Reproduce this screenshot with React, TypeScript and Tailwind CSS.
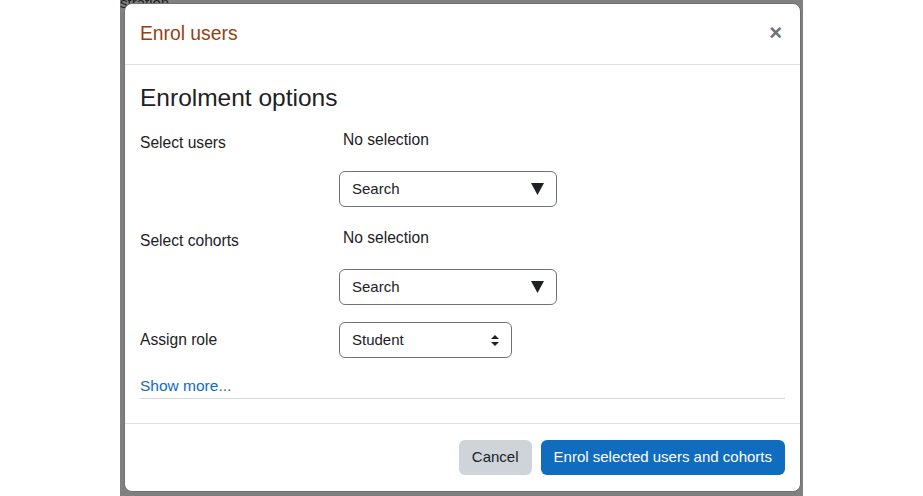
import React from "react";

const font = { fontFamily: '"Liberation Sans", Arial, sans-serif' };

function SearchBox() {
  return (
    <div className="flex h-[36px] w-[218px] items-center justify-between rounded-[6px] border border-[#6e737a] bg-white pl-[12px] pr-[12px]">
      <span className="text-[15px] text-[#1d2125]">Search</span>
      <svg width="13" height="12" viewBox="0 0 13 12">
        <polygon points="0,0 13,0 6.5,12" fill="#1d2125" />
      </svg>
    </div>
  );
}

export default function App() {
  return (
    <div className="flex h-[496px] w-[923px] bg-white" style={font}>
      <div className="w-[120px]" />
      <div className="relative h-[496px] w-[683px] overflow-hidden bg-[#808080]">
        <div className="absolute left-[0px] top-[-5px] text-[15px] leading-[15px] text-[#202020]">
          stration
        </div>
        <div className="relative ml-[4px] mt-[3px] flex h-[489px] w-[677px] flex-col rounded-[8px] border border-[#707070] bg-white">
          {/* header */}
          <div className="flex h-[61px] shrink-0 items-center justify-between border-b border-[#dee2e6] pl-[15px] pr-[18px]">
            <span className="text-[19.3px] text-[#973f11]">Enrol users</span>
            <span className="mt-[-2px] text-[22px] font-bold leading-none text-[#6a737b]">×</span>
          </div>
          {/* body */}
          <div className="flex flex-col px-[15px] pt-[18px]">
            <div className="text-[24.5px] leading-[29px] text-[#1d2125]">Enrolment options</div>
            <div className="mt-[16px] flex">
              <div className="w-[199px] pt-[4px] text-[15.6px] leading-[22px] text-[#1d2125]">Select users</div>
              <div className="flex flex-col">
                <div className="pl-[4px] pt-[1px] text-[15.6px] leading-[22px] text-[#1d2125]">No selection</div>
                <div className="mt-[20px]">
                  <SearchBox />
                </div>
              </div>
            </div>
            <div className="mt-[19px] flex">
              <div className="w-[199px] pt-[4px] text-[15.6px] leading-[22px] text-[#1d2125]">Select cohorts</div>
              <div className="flex flex-col">
                <div className="pl-[4px] pt-[1px] text-[15.6px] leading-[22px] text-[#1d2125]">No selection</div>
                <div className="mt-[20px]">
                  <SearchBox />
                </div>
              </div>
            </div>
            <div className="mt-[17px] flex items-center">
              <div className="w-[199px] text-[15.6px] leading-[22px] text-[#1d2125]">Assign role</div>
              <div className="flex h-[36px] w-[173px] items-center justify-between rounded-[6px] border border-[#6e737a] bg-white pl-[12px] pr-[12px]">
                <span className="text-[15px] text-[#1d2125]">Student</span>
                <svg width="8" height="11" viewBox="0 0 8 11">
                  <polygon points="4,0 8,4 0,4" fill="#1d2125" />
                  <polygon points="0,7 8,7 4,11" fill="#1d2125" />
                </svg>
              </div>
            </div>
            <div className="mt-[17px] border-b border-[#d3d6da] pb-[1px] text-[15.5px] leading-[22px] text-[#0f6cbf]">
              Show more...
            </div>
          </div>
          {/* footer */}
          <div className="mt-[24px] flex flex-1 items-start justify-end gap-[9px] border-t border-[#dee2e6] pr-[15px] pt-[16px]">
            <button className="h-[35px] rounded-[6px] bg-[#ced4da] px-[13px] text-[15px] text-[#1d2125]">Cancel</button>
            <button className="h-[35px] rounded-[6px] bg-[#0f6cbf] px-[13px] text-[15px] text-white">
              Enrol selected users and cohorts
            </button>
          </div>
        </div>
      </div>
      <div className="flex-1" />
    </div>
  );
}
